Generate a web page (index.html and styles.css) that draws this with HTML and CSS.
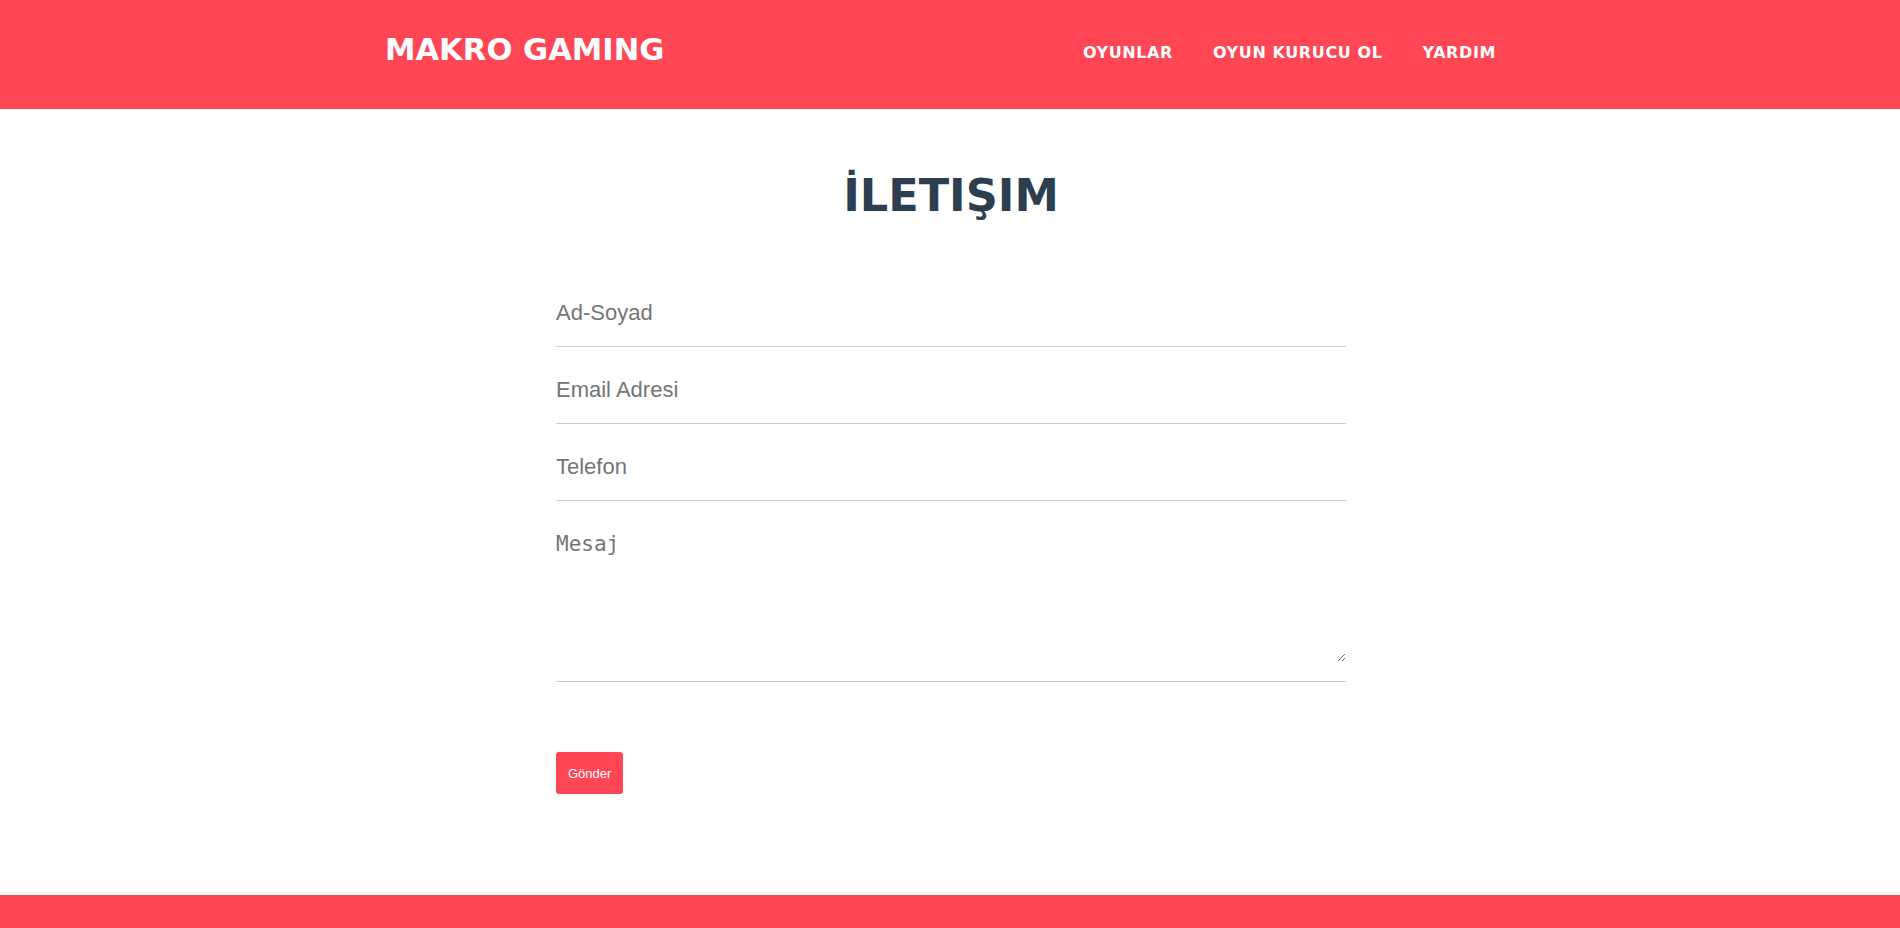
FILE: index.html
```html
<!DOCTYPE html>
<html lang="tr">
<head>
<meta charset="utf-8">
<title>İletişim - Makro Gaming</title>
<link rel="stylesheet" href="styles.css">
</head>
<body>
<header class="site-header">
  <div class="header-inner">
    <a class="logo" href="#">MAKRO GAMING</a>
    <nav class="nav">
      <a class="nav-link" href="#">OYUNLAR</a>
      <a class="nav-link" href="#">OYUN KURUCU OL</a>
      <a class="nav-link" href="#">YARDIM</a>
    </nav>
  </div>
</header>
<main class="main">
  <h1 class="title">İLETIŞIM</h1>
  <form class="contact-form">
    <div class="field"><input class="input" type="text" placeholder="Ad-Soyad"></div>
    <div class="field"><input class="input" type="email" placeholder="Email Adresi"></div>
    <div class="field"><input class="input" type="tel" placeholder="Telefon"></div>
    <div class="field field-area"><textarea class="textarea" placeholder="Mesaj"></textarea></div>
    <button class="btn" type="button">Gönder</button>
  </form>
</main>
<footer class="site-footer"></footer>
</body>
</html>
```
FILE: styles.css
```css
* { box-sizing: border-box; }
html, body { margin: 0; padding: 0; }
body {
  background: #ffffff;
  font-family: "Liberation Sans", Arial, sans-serif;
  height: 928px;
  overflow: hidden;
  display: flex;
  flex-direction: column;
}
.site-header {
  background: #ff4655;
  height: 109px;
  flex: none;
}
.header-inner {
  width: 1140px;
  height: 100%;
  margin: 0 auto;
  display: flex;
  align-items: center;
  justify-content: space-between;
}
.logo {
  font-family: "DejaVu Sans", sans-serif;
  font-weight: bold;
  font-size: 30.6px;
  color: #ffffff;
  text-decoration: none;
  margin-left: 5px;
  margin-bottom: 9px;
  line-height: 36px;
}
.nav {
  display: flex;
  margin-bottom: 4px;
  margin-right: 4px;
}
.nav-link {
  font-family: "DejaVu Sans", sans-serif;
  font-weight: bold;
  font-size: 16px;
  letter-spacing: 0.6px;
  color: #ffffff;
  text-decoration: none;
  padding: 0 20px;
  line-height: 19px;
}
.main {
  flex: 1;
  padding: 60px 0 0 2px;
}
.title {
  margin: 0 0 47px;
  text-align: center;
  font-family: "DejaVu Sans", sans-serif;
  font-weight: bold;
  font-size: 44.6px;
  line-height: 54px;
  color: #2c3e50;
}
.contact-form {
  width: 790px;
  margin: 0 auto;
}
.field {
  padding: 22px 0 13px;
  border-bottom: 1px solid #cccccc;
}
.input {
  display: block;
  width: 100%;
  height: 41px;
  border: 0;
  padding: 0;
  outline: none;
  background: transparent;
  font-family: "Liberation Sans", Arial, sans-serif;
  font-size: 22px;
  color: #333333;
}
.input::placeholder { color: #757575; }
.field-area {
  padding: 24px 0 19px;
}
.textarea {
  display: block;
  width: 100%;
  height: 137px;
  border: 0;
  padding: 7px 0 0;
  outline: none;
  background: transparent;
  font-family: "DejaVu Sans Mono", monospace;
  font-size: 21px;
  color: #333333;
}
.textarea::placeholder { color: #757575; }
.btn {
  display: block;
  margin-top: 70px;
  height: 42px;
  padding: 0 12px;
  border: 0;
  border-radius: 3px;
  background: #ff4655;
  color: #ffffff;
  font-family: "Liberation Sans", Arial, sans-serif;
  font-size: 13px;
  cursor: pointer;
}
.site-footer {
  background: #ff4655;
  height: 33px;
  flex: none;
}
```
